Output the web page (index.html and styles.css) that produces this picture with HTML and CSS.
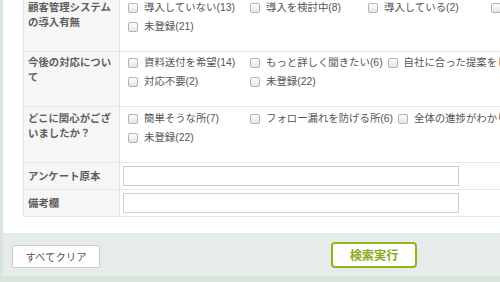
FILE: index.html
```html
<!DOCTYPE html>
<html lang="ja">
<head>
<meta charset="utf-8">
<title>検索</title>
<link rel="stylesheet" href="styles.css">
</head>
<body>
<div class="page">
  <div class="panel">
    <div class="form">
      <div class="row">
        <div class="label">顧客管理システムの導入有無</div>
        <div class="value">
          <div class="line">
            <label class="cb"><span class="box"></span>導入していない(13)</label>
            <label class="cb"><span class="box"></span>導入を検討中(8)</label>
            <label class="cb"><span class="box"></span>導入している(2)</label>
            <label class="cb"><span class="box"></span>わからない(4)</label>
          </div>
          <div class="line">
            <label class="cb"><span class="box"></span>未登録(21)</label>
          </div>
        </div>
      </div>
      <div class="row">
        <div class="label">今後の対応について</div>
        <div class="value">
          <div class="line">
            <label class="cb"><span class="box"></span>資料送付を希望(14)</label>
            <label class="cb"><span class="box"></span>もっと詳しく聞きたい(6)</label>
            <label class="cb"><span class="box"></span>自社に合った提案をしてほしい(3)</label>
          </div>
          <div class="line">
            <label class="cb"><span class="box"></span>対応不要(2)</label>
            <label class="cb"><span class="box"></span>未登録(22)</label>
          </div>
        </div>
      </div>
      <div class="row row-tall">
        <div class="label">どこに関心がございましたか？</div>
        <div class="value">
          <div class="line">
            <label class="cb"><span class="box"></span>簡単そうな所(7)</label>
            <label class="cb"><span class="box"></span>フォロー漏れを防げる所(6)</label>
            <label class="cb"><span class="box"></span>全体の進捗がわかりやすい所(5)</label>
          </div>
          <div class="line">
            <label class="cb"><span class="box"></span>未登録(22)</label>
          </div>
        </div>
      </div>
      <div class="row row-input">
        <div class="label">アンケート原本</div>
        <div class="value"><input class="text" type="text"></div>
      </div>
      <div class="row row-input">
        <div class="label">備考欄</div>
        <div class="value"><input class="text" type="text"></div>
      </div>
    </div>
    <div class="footer">
      <button class="btn-clear" type="button">すべてクリア</button>
      <button class="btn-search" type="button">検索実行</button>
    </div>
  </div>
</div>
</body>
</html>
```
FILE: styles.css
```css
html, body {
  margin: 0;
  padding: 0;
  overflow: hidden;
}
body {
  background: #d8e5dd;
  font-family: "Liberation Sans", "Noto Sans CJK JP", sans-serif;
  font-size: 10.4px;
  color: #555;
}
.page {
  height: 282px;
  overflow: hidden;
}
.panel {
  margin-left: 3px;
  width: 742px;
  background: #fff;
}
.form {
  margin-top: -3px;
  padding: 0 20px 16px;
}
.row {
  display: grid;
  grid-template-columns: 97px 1fr;
  border-bottom: 1px solid #e6e6e6;
}
.label {
  background: #f6f6f6;
  border-left: 1px solid #e6e6e6;
  border-right: 1px solid #e6e6e6;
  padding: 3px 4px;
  line-height: 15px;
  font-weight: bold;
  color: #5f5f5f;
}
.value {
  padding: 3px 0 16px 8px;
  display: flex;
  flex-direction: column;
  gap: 3px;
}
.row-tall .label {
  padding-top: 4px;
}
.row-tall .value {
  padding-top: 4px;
}
.line {
  display: flex;
  height: 16px;
  white-space: nowrap;
}
.cb {
  box-sizing: border-box;
  display: flex;
  align-items: center;
  gap: 6px;
  min-width: 122px;
  padding-right: 5px;
  line-height: 16px;
  color: #555;
}
.cb:nth-child(2) { min-width: 118px; }
.cb:nth-child(3) { min-width: 123px; }
.box {
  box-sizing: border-box;
  width: 10px;
  height: 10px;
  border: 1px solid #b3b3b3;
  border-radius: 2px;
  background: linear-gradient(#fdfdfd, #e6e6e6);
  flex: none;
}
.row-input .label {
  display: flex;
  align-items: center;
}
.row-input .value {
  padding: 3px 0 3px 3px;
}
.text {
  box-sizing: border-box;
  width: 336px;
  height: 20px;
  border: 1px solid #cfcfcf;
  margin: 0;
  padding: 0 4px;
  background: #fff;
}
.footer {
  background: #e6ece9;
  height: 43px;
  box-sizing: border-box;
  padding: 0 9px 8px;
  display: grid;
  grid-template-columns: 1fr auto 1fr;
  align-items: end;
}
.btn-clear {
  justify-self: start;
  width: 88px;
  height: 23px;
  background: #fff;
  border: 1px solid #cccccc;
  border-radius: 2px;
  font-family: inherit;
  font-size: 10.4px;
  color: #555;
  padding: 0;
}
.btn-search {
  width: 86px;
  height: 26px;
  background: #fff;
  border: 2px solid #93b41d;
  border-radius: 4px;
  font-family: inherit;
  font-size: 12.2px;
  font-weight: bold;
  color: #8aab1c;
  padding: 0;
}
```
